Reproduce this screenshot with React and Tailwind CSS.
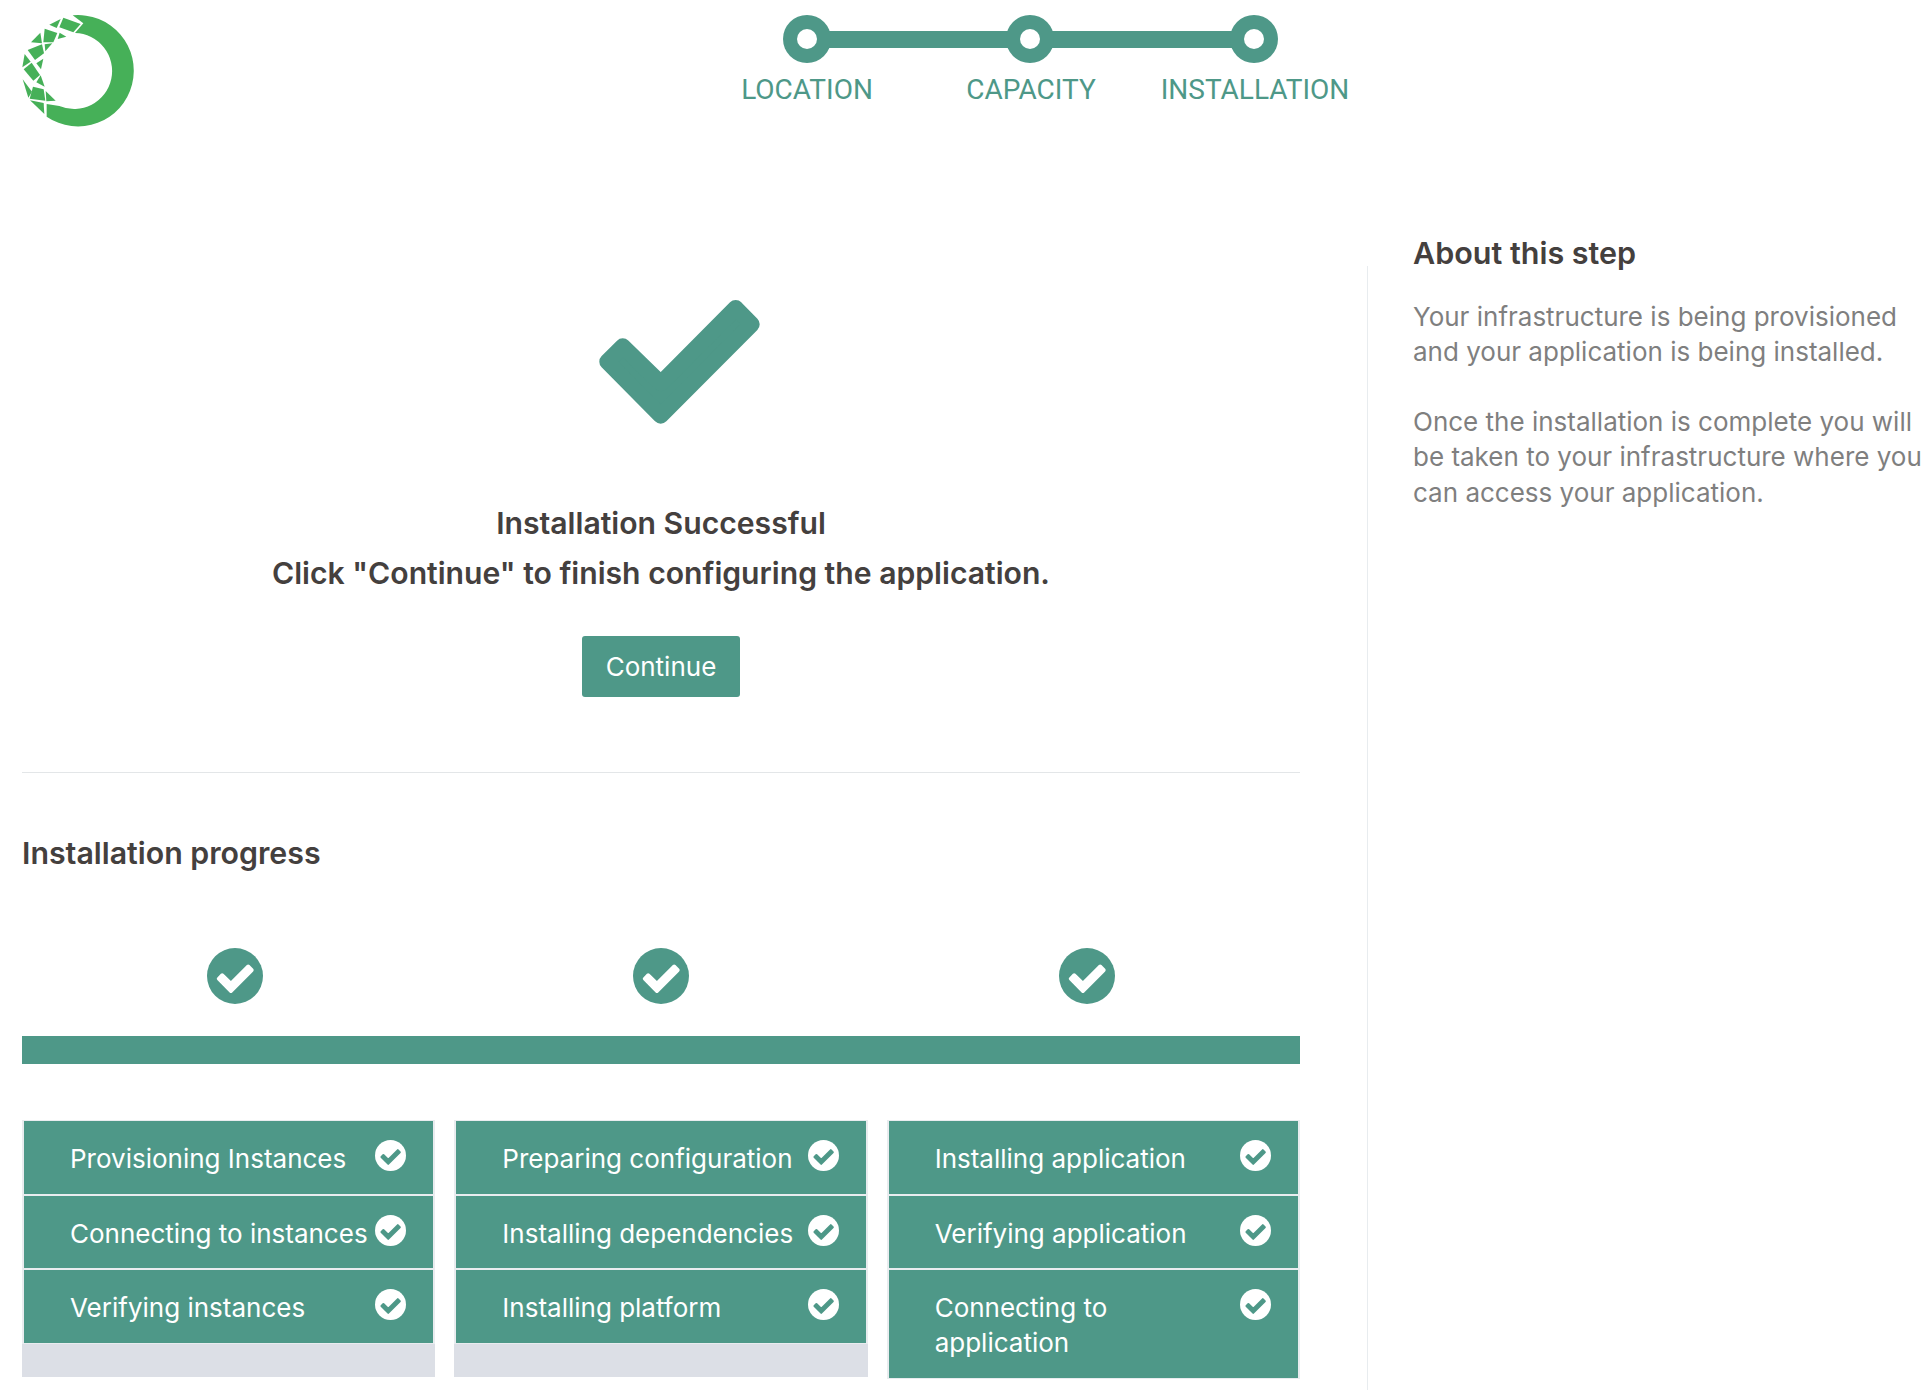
import React from "react";

const columns = [
  ["Provisioning Instances", "Connecting to instances", "Verifying instances"],
  ["Preparing configuration", "Installing dependencies", "Installing platform"],
  ["Installing application", "Verifying application", "Connecting to application"],
];

const logoCells = [
  "148,74 182,57 170,84",
  "190,53 242,72 220,97 178,82",
  "93,127 121,98 126,130",
  "134,86 172,99 160,127 130,127",
  "173,117 179,98 199,110",
  "134,133 157,130 136,154",
  "83,150 126,133 132,160 105,180",
  "109,190 130,176 123,208",
  "67,202 74,162 92,185",
  "71,208 95,188 120,225 100,242",
  "109,247 122,226 134,260",
  "68,238 96,275 85,293",
  "99,260 131,268 136,302 89,296",
  "137,273 167,302 139,304",
  "90,301 131,309 133,342",
];

const checkPoints = "9.3,61.7 24.7,46.3 62.7,83.3 137.7,8 153.7,24.3 62.7,115.7";

function Check({ color }) {
  return <polygon points={checkPoints} fill={color} stroke={color} strokeWidth="16" strokeLinejoin="round" />;
}

function CheckCircle({ size, circle, check }) {
  return (
    <svg width={size} height={size} viewBox="0 0 56 56" className="shrink-0">
      <circle cx="28" cy="28" r="28" fill={circle} />
      <g transform="translate(9.5 16.5) scale(0.23)">
        <Check color={check} />
      </g>
    </svg>
  );
}

function Logo() {
  return (
    <svg width="160" height="140" viewBox="0 0 480 420" className="shrink-0">
      <path
        d="M218 46 A167 167 0 1 1 140 350 L140 312 L178 318 A114 114 0 1 0 225 99 L250 70 Z"
        fill="#46b058"
      />
      {logoCells.map((pts) => (
        <polygon key={pts} points={pts} fill="#46b058" />
      ))}
    </svg>
  );
}

function Stepper() {
  const steps = [
    { label: "LOCATION", x: 807 },
    { label: "CAPACITY", x: 1030 },
    { label: "INSTALLATION", x: 1254 },
  ];
  return (
    <div className="ml-[535px] pt-[15px] w-[672px]">
      <svg width="672" height="48" viewBox="695 15 672 48" className="block">
        <rect x="807" y="31" width="447" height="17" fill="#4e9888" />
        {steps.map((s) => (
          <g key={s.label}>
            <circle cx={s.x} cy="39" r="24" fill="#4e9888" />
            <circle cx={s.x} cy="39" r="10" fill="#fff" />
          </g>
        ))}
      </svg>
      <div className="grid grid-cols-3 mt-[10px] font-['Roboto',sans-serif] text-[28px] leading-[34px] text-[#4e9888] text-center">
        {steps.map((s) => (
          <div key={s.label}>{s.label}</div>
        ))}
      </div>
    </div>
  );
}

function TaskRow({ label }) {
  return (
    <div className="flex items-start justify-between bg-[#4e9888] border-x-2 border-y border-[#e9ecef] pl-[46px] pr-[27px] pt-[19px] pb-[18.6px] text-white">
      <span className="w-[305px] mt-[1px] -mb-[1px] leading-[35px]">{label}</span>
      <CheckCircle size={31} circle="#fff" check="#4e9888" />
    </div>
  );
}

export default function App() {
  return (
    <div className="w-[1928px] h-[1390px] overflow-hidden bg-white font-['Inter',sans-serif] text-[26px]">
      <div className="flex h-[266px]">
        <Logo />
        <Stepper />
      </div>
      <div className="flex">
        <div className="w-[1367px] pl-[22px] pr-[67px]">
          <div className="flex flex-col items-center">
            <svg width="162" height="125" viewBox="0 0 162 125" className="ml-[36px] mt-[34px]">
              <Check color="#4e9888" />
            </svg>
            <h1 className="mt-[73px] text-[30.15px] leading-[50px] font-semibold text-[#44403e] text-center">
              Installation Successful
              <br />
              Click "Continue" to finish configuring the application.
            </h1>
            <button className="mt-[38px] w-[158px] h-[61px] rounded-[3px] bg-[#4e9888] text-white">
              Continue
            </button>
          </div>
          <div className="mt-[75px] border-t border-[#e3e6e8]" />
          <h2 className="mt-[60px] text-[30.3px] leading-[40px] font-semibold text-[#44403e]">
            Installation progress
          </h2>
          <div className="grid grid-cols-3 mt-[75px] justify-items-center">
            <CheckCircle size={56} circle="#4e9888" check="#fff" />
            <CheckCircle size={56} circle="#4e9888" check="#fff" />
            <CheckCircle size={56} circle="#4e9888" check="#fff" />
          </div>
          <div className="mt-[32px] h-[28px] bg-[#4e9888]" />
          <div className="grid grid-cols-3 gap-[19px] mt-[56px] items-stretch">
            {columns.map((tasks) => (
              <div key={tasks[0]} className="bg-[#dcdfe6] h-[257px]">
                {tasks.map((t) => (
                  <TaskRow key={t} label={t} />
                ))}
              </div>
            ))}
          </div>
        </div>
        <aside className="border-l border-[#e8ecef] pl-[45px] h-[1124px]">
          <h3 className="-mt-[33px] text-[30.5px] leading-[40px] font-semibold text-[#44403e]">
            About this step
          </h3>
          <div className="mt-[25.5px] text-[26px] leading-[35.3px] text-[#7f7f7f] whitespace-nowrap">
            <p>
              Your infrastructure is being provisioned
              <br />
              and your application is being installed.
            </p>
            <p className="mt-[35px]">
              Once the installation is complete you will
              <br />
              be taken to your infrastructure where you
              <br />
              can access your application.
            </p>
          </div>
        </aside>
      </div>
    </div>
  );
}
